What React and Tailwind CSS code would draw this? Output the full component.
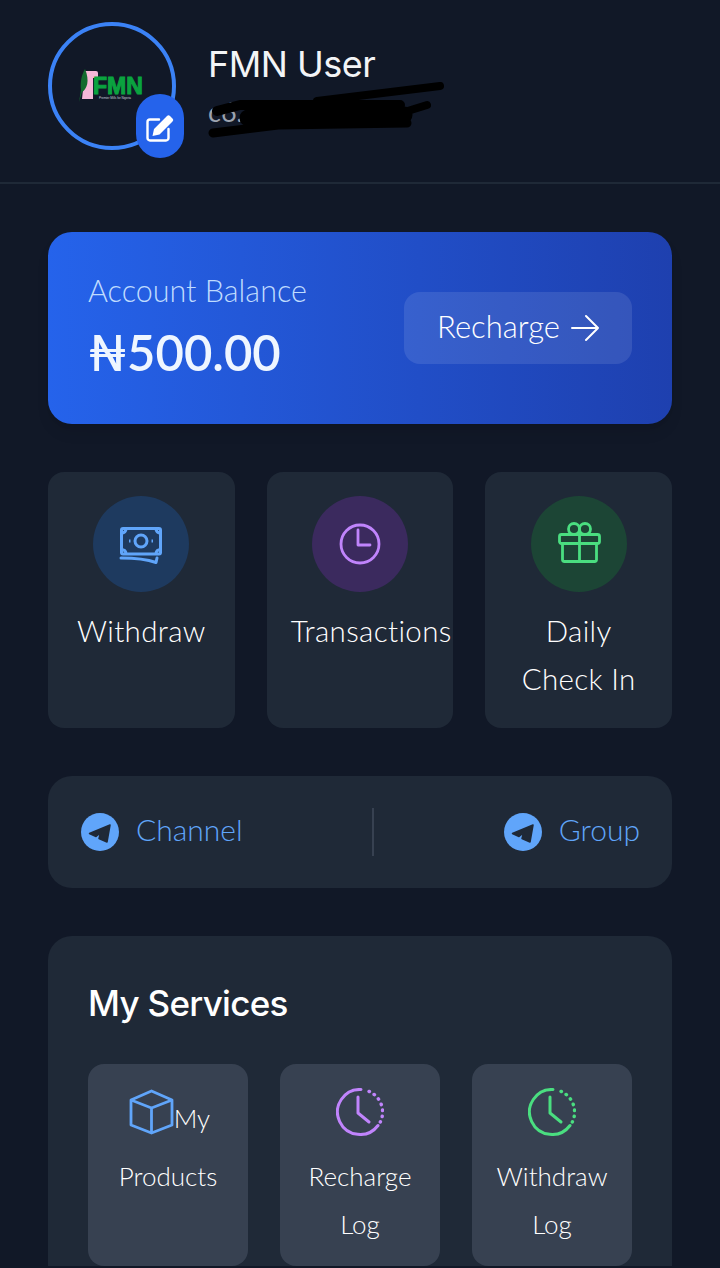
const actions = [
  { label: "Withdraw", circle: "bg-[#1e3a5f]", icon: <CashIcon /> },
  { label: "Transactions", circle: "bg-[#3b2a5e]", icon: <ClockIcon /> },
  { label: "Daily Check In", circle: "bg-[#1c4535]", icon: <GiftIcon /> },
];

function CashIcon() {
  return (
    <svg viewBox="0 0 48 48" className="w-12 h-12 text-[#60a5fa]" fill="none" stroke="currentColor" strokeWidth="3">
      <rect x="4.500" y="8.500" width="39" height="25.500" rx="1.500" />
      <path d="M4 13c3 0 5-1.500 5-4.500M39 8.500c0 3 2 4.500 5 4.500M4 29.500c3 0 5 1.500 5 4.500M44 29.500c-3 0-5 1.500-5 4.500" />
      <circle cx="24" cy="21" r="6" />
      <path d="M12 21h1.500M34.500 21h1.500" />
      <path d="M4 38c12 0 25 1 35 4.500l1-4.500" strokeLinecap="round" strokeLinejoin="round" />
    </svg>
  );
}

function ClockIcon() {
  return (
    <svg viewBox="0 0 48 48" className="w-12 h-12 text-[#c084fc]" fill="none" stroke="currentColor" strokeWidth="2.800">
      <circle cx="24" cy="24" r="19" />
      <path d="M22 10v15h12" strokeLinecap="round" strokeLinejoin="round" />
    </svg>
  );
}

function GiftIcon() {
  return (
    <svg viewBox="0 0 48 48" className="w-12 h-12 text-[#4ade80]" fill="none" stroke="currentColor" strokeWidth="2.800" strokeLinejoin="round">
      <rect x="4.500" y="14.500" width="40" height="9" rx="2" />
      <path d="M7.500 23.500v16a2 2 0 0 0 2 2h30a2 2 0 0 0 2-2v-16M24.500 14.500v27" />
      <circle cx="19" cy="9" r="5.500" />
      <circle cx="30" cy="9" r="5.500" />
    </svg>
  );
}

function CubeIcon() {
  return (
    <svg viewBox="0 0 48 48" className="w-12 h-12 shrink-0 text-[#60a5fa]" fill="none" stroke="currentColor" strokeWidth="2.800" strokeLinejoin="round">
      <path d="M25.500 3 46 12v25L25.500 45 5 37V12z" />
      <path d="M5 12 25.500 20 46 12M25.500 20v25" />
    </svg>
  );
}

function HistoryIcon({ color }) {
  return (
    <svg viewBox="0 0 48 48" className={`w-12 h-12 ${color}`} fill="none" stroke="currentColor" strokeWidth="3" strokeLinecap="round">
      <path d="M25 1.500A22.500 22.500 0 1 0 42 37.500" />
      <path d="M33 3.400A22.500 22.500 0 0 1 44.300 34" strokeDasharray="0.5 5.500" strokeWidth="3.400" />
      <path d="M22 9v16l11 9" strokeLinejoin="round" />
    </svg>
  );
}

function TelegramIcon() {
  return (
    <svg viewBox="0 0 40 40" className="w-10 h-10 shrink-0">
      <circle cx="20" cy="20" r="19" fill="#60a5fa" />
      <path d="M30 13 9.500 21.500 16 24.500 20.500 21 19 26.500 27 30Z" fill="#1f2937" stroke="#1f2937" strokeWidth="1.500" strokeLinejoin="round" />
    </svg>
  );
}

function EditIcon() {
  return (
    <svg viewBox="0 0 30 30" className="w-[30px] h-[30px] mt-[2px]" fill="none">
      <path d="M14 7.500H5A2.500 2.500 0 0 0 2.500 10v16A2.500 2.500 0 0 0 5 28.500h16a2.500 2.500 0 0 0 2.500-2.500v-9" stroke="#fff" strokeWidth="2.400" strokeLinecap="round" />
      <path d="M7.500 24 9 17 22 4a2 2 0 0 1 3 0l2.500 2.500a2 2 0 0 1 0 3L14.500 22.500z" fill="#fff" />
    </svg>
  );
}

function FmnLogo() {
  return (
    <div className="w-[66px] h-[34px] relative">
      <svg viewBox="0 0 66 34" className="absolute inset-0 w-full h-full">
        <path d="M6 2h11q2 0 2 2v5h-5v21H3z" fill="#f5b8d8" />
        <path d="M6 0C3 5 1 12 2 21L0 33l3-10c5-3 8-11 3-23z" fill="#126b2f" />
      </svg>
      <span className="absolute left-[14px] top-[9px] text-[23px] leading-[17px] font-black text-[#0aa33f] font-['Liberation_Sans',sans-serif] [-webkit-text-stroke:1px_#0aa33f]">
        FMN
      </span>
      <span className="absolute left-[20px] top-[27px] text-[3px] leading-[4px] whitespace-nowrap text-[#c9d1d9] font-['Liberation_Sans',sans-serif]">
        Premier Mills for Nigeria
      </span>
    </div>
  );
}

function Scribble() {
  return (
    <svg viewBox="0 0 240 60" className="absolute left-0 top-[-10px] w-[240px] h-[60px]" fill="none" stroke="#000" strokeLinecap="round" strokeLinejoin="round">
      <path d="M109 19 232 4" strokeWidth="8" />
      <path d="M9 29 32 23H192" strokeWidth="10" />
      <path d="M40 36 196 33" strokeWidth="17" />
      <path d="M219 23 190 32" strokeWidth="8" />
      <path d="M5 51 70 43 199 41" strokeWidth="9" />
    </svg>
  );
}

export default function App() {
  return (
    <div className="h-screen overflow-hidden bg-[#111827] font-['Lato','Open_Sans',sans-serif] text-white">
      <header className="flex items-center px-12 pt-[22px] pb-8 border-b-2 border-[#1f2937]">
        <div className="relative w-32 h-32 shrink-0">
          <div className="w-32 h-32 rounded-full border-4 border-[#3b82f6] flex items-center justify-center">
            <FmnLogo />
          </div>
          <button className="absolute left-[88px] top-[72px] w-12 h-16 rounded-full bg-[#2563eb] flex items-center justify-center">
            <EditIcon />
          </button>
        </div>
        <div className="ml-8 h-[88px] mt-[-4px]">
          <h1 className="text-[36px] leading-[48px] font-normal tracking-[-0.5px] font-['Inter',sans-serif] text-[#f3f4f6]">FMN User</h1>
          <div className="relative h-10 mt-[4px] text-[27px] leading-10 text-[#9ca3af]">
            c6.
            <Scribble />
          </div>
        </div>
      </header>

      <main className="px-12 pt-12">
        <section className="h-48 rounded-3xl bg-gradient-to-r from-[#2563eb] to-[#1e40af] shadow-lg flex items-center justify-between px-10">
          <div className="pb-1">
            <p className="text-[30.500px] leading-10 font-light text-[#bfdbfe]">Account Balance</p>
            <p className="mt-3 text-[49px] leading-[60px] font-semibold text-[#eff6ff]">₦500.00</p>
          </div>
          <button className="w-[228px] h-[72px] rounded-2xl bg-white/10 flex items-center justify-center gap-[11px] text-[31px] font-light">
            <span className="-mt-1">Recharge</span>
            <svg viewBox="0 0 28 28" className="w-7 h-7" fill="none" stroke="#fff" strokeWidth="2" strokeLinecap="round" strokeLinejoin="round">
              <path d="M1 14h26M15 2l12 12-12 12" />
            </svg>
          </button>
        </section>

        <section className="grid grid-cols-3 gap-8 mt-12">
          {actions.map((a) => (
            <div key={a.label} className="h-64 rounded-2xl bg-[#1f2937] p-6 text-center">
              <div className={`w-24 h-24 mx-auto rounded-full flex items-center justify-center ${a.circle}`}>{a.icon}</div>
              <p className="mt-[15px] text-[29.500px] leading-[48px] tracking-[0.35px] text-white font-light">{a.label}</p>
            </div>
          ))}
        </section>

        <section className="h-28 mt-12 rounded-3xl bg-[#1f2937] px-8 flex items-center justify-between">
          <a className="flex items-center gap-4 text-[30px] font-light text-[#60a5fa]">
            <TelegramIcon />
            <span className="-mt-[6px]">Channel</span>
          </a>
          <div className="w-[2px] h-12 bg-[#374151]" />
          <a className="flex items-center gap-4 text-[30px] font-light text-[#60a5fa]">
            <TelegramIcon />
            <span className="-mt-[6px]">Group</span>
          </a>
        </section>

        <section className="mt-12 rounded-t-3xl bg-[#1f2937] px-10 pt-[39px]">
          <h2 className="text-[35px] leading-[56px] font-medium font-['Inter',sans-serif] tracking-[-0.7px]">My Services</h2>
          <div className="grid grid-cols-3 gap-8 mt-[33px]">
            <div className="h-[202px] rounded-2xl bg-[#374151] p-6 text-center text-[26px] leading-[48px] font-light text-white">
              <div className="flex justify-center h-[64px] -mx-4">
                <CubeIcon />
                <span className="mt-[6px]">My</span>
              </div>
              <p className="whitespace-nowrap -mx-4">Products</p>
            </div>
            <div className="h-[202px] rounded-2xl bg-[#374151] p-6 text-center text-[26px] leading-[48px] font-light text-white">
              <div className="flex justify-center h-[64px]">
                <HistoryIcon color="text-[#c084fc]" />
              </div>
              <p className="whitespace-nowrap -mx-4">Recharge</p>
              <p>Log</p>
            </div>
            <div className="h-[202px] rounded-2xl bg-[#374151] p-6 text-center text-[26px] leading-[48px] font-light text-white">
              <div className="flex justify-center h-[64px]">
                <HistoryIcon color="text-[#4ade80]" />
              </div>
              <p className="whitespace-nowrap -mx-4">Withdraw</p>
              <p>Log</p>
            </div>
          </div>
        </section>
      </main>
    </div>
  );
}
